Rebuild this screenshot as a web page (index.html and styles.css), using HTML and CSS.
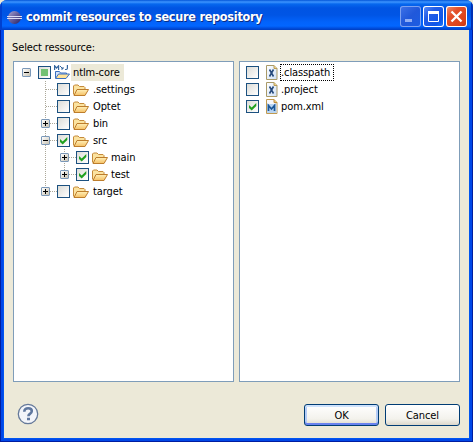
FILE: index.html
```html
<!DOCTYPE html>
<html lang="en">
<head>
<meta charset="utf-8">
<title>commit resources to secure repository</title>
<link rel="stylesheet" href="styles.css">
</head>
<body>
<svg class="defs" width="0" height="0" aria-hidden="true">
  <defs>
    <linearGradient id="fold" x1="0" y1="0" x2="0" y2="1"><stop offset="0" stop-color="#fff0b8"/><stop offset="1" stop-color="#f5c064"/></linearGradient>
    <linearGradient id="orb" x1="0" y1="0" x2="1" y2="1"><stop offset="0" stop-color="#aaa5d2"/><stop offset=".5" stop-color="#625c9c"/><stop offset="1" stop-color="#28205f"/></linearGradient>
    <linearGradient id="page" x1="0" y1="0" x2="1" y2="1"><stop offset="0" stop-color="#fff"/><stop offset="1" stop-color="#cfe0f5"/></linearGradient>
  </defs>
  <symbol id="folder" viewBox="0 0 16 16">
    <path d="M.5 12.500v-8.500l1-1h3.500l1.500 1.500h4.500l1 1v2" fill="#fbe3a0" stroke="#c58a3a"/>
    <path d="M1 13.500l3-6h11.500l-3.500 6z" fill="url(#fold)" stroke="#bd7d2c" stroke-linejoin="round"/>
  </symbol>
  <symbol id="project" viewBox="0 0 16 16">
    <path d="M1.500 13V6.500h4l1 1.500h6v2" fill="#d3e3fa" stroke="#3b6fc0"/>
    <path d="M1.500 13.500l3-4.500h11l-3.500 4.500z" fill="#ffe298" stroke="#3b6fc0" stroke-linejoin="round"/>
    <path d="M.6 5V.800l2 2.200 2-2.200V5M13.400 0v3.300q0 1.200-1.200 1.200h-1.200" fill="none" stroke="#34669e" stroke-width="1.200"/>
    <path d="M6 1l3 3M9 2v2H7" fill="none" stroke="#34669e"/>
  </symbol>
  <symbol id="tick" viewBox="0 0 13 13"><path d="M3 5v3l2.700 2.600L10.300 6V3L5.700 7.600z" fill="#21a121"/></symbol>
  <symbol id="xfile" viewBox="0 0 12 16">
    <path d="M.5.500h7.500l3 3v11H.5z" fill="url(#page)" stroke="#a99a68"/><path d="M8 .5v3h3" fill="#f1d58a" stroke="#b99c56"/>
    <path d="M3.500 4.500l4 7M7.500 4.500l-4 7" stroke="#264a7d" stroke-width="1.600"/>
  </symbol>
  <symbol id="mfile" viewBox="0 0 12 16">
    <path d="M.5.500h7.500l3 3v11H.5z" fill="#f7f8fb" stroke="#c09a50"/><path d="M8 .5v3h3" fill="#f1c878" stroke="#bd8d3e"/><path d="M1 5h9.500v9H1z" fill="#b9d4f1"/>
    <path d="M2.500 12V6.500l3 3.500 3-3.500V12" fill="none" stroke="#1b5798" stroke-width="1.700"/>
  </symbol>
</svg>
<div class="window">
  <header class="titlebar">
    <svg class="logo" width="15" height="15" viewBox="0 0 15 15"><circle cx="7.500" cy="7.500" r="6.500" fill="url(#orb)"/><path d="M0 6.500h15M0 8.500h15" stroke="#dcdcf3"/></svg>
    <h1 class="title">commit resources to secure repository</h1>
    <div class="controls">
      <span class="control minimize"><svg width="21" height="21"><path d="M5 13h7v3H5z" fill="#91aef5"/></svg></span>
      <span class="control maximize"><svg width="21" height="21"><path d="M5.500 6v9.500h10V6z" fill="none" stroke="#fff"/><path d="M5 5h11v3H5z" fill="#fff"/></svg></span>
      <span class="control close"><svg width="21" height="21"><path d="M5.500 5.500l10 10M15.500 5.500l-10 10" stroke="#fff" stroke-width="2.300"/></svg></span>
    </div>
  </header>
  <main class="content">
    <div class="prompt">Select ressource:</div>
    <div class="panes">
      <div class="pane tree">
        <div class="row root"><i class="expander"></i><i class="check partial"></i><svg class="icon"><use href="#project"/></svg><span class="label selected">ntlm-core</span></div>
        <div class="branch">
          <div class="row"><i class="gap"></i><i class="dots"></i><i class="check"></i><svg class="icon"><use href="#folder"/></svg><span class="label">.settings</span></div>
          <div class="row"><i class="gap"></i><i class="dots"></i><i class="check"></i><svg class="icon"><use href="#folder"/></svg><span class="label">Optet</span></div>
          <div class="row"><i class="expander plus"></i><i class="dots"></i><i class="check"></i><svg class="icon"><use href="#folder"/></svg><span class="label">bin</span></div>
          <div class="row"><i class="expander"></i><i class="dots"></i><i class="check"><svg><use href="#tick"/></svg></i><svg class="icon"><use href="#folder"/></svg><span class="label">src</span></div>
          <div class="branch nested">
            <div class="row"><i class="expander plus"></i><i class="dots"></i><i class="check"><svg><use href="#tick"/></svg></i><svg class="icon"><use href="#folder"/></svg><span class="label">main</span></div>
            <div class="row"><i class="expander plus"></i><i class="dots"></i><i class="check"><svg><use href="#tick"/></svg></i><svg class="icon"><use href="#folder"/></svg><span class="label">test</span></div>
          </div>
          <div class="row"><i class="expander plus"></i><i class="dots"></i><i class="check"></i><svg class="icon"><use href="#folder"/></svg><span class="label">target</span></div>
        </div>
      </div>
      <div class="pane files">
        <div class="row"><i class="check"></i><svg class="file"><use href="#xfile"/></svg><span class="label focused">.classpath</span></div>
        <div class="row"><i class="check"></i><svg class="file"><use href="#xfile"/></svg><span class="label">.project</span></div>
        <div class="row"><i class="check"><svg><use href="#tick"/></svg></i><svg class="file"><use href="#mfile"/></svg><span class="label">pom.xml</span></div>
      </div>
    </div>
    <footer class="footer">
      <svg class="help" width="22" height="22" viewBox="0 0 22 22"><circle cx="11" cy="11" r="9.700" fill="#f3f5fa" stroke="#657999" stroke-width="1.300"/><path d="M7.300 8.800q0-3.600 3.900-3.600 3.600 0 3.600 2.900 0 1.800-2 2.900-1.400.8-1.400 2.200" fill="none" stroke="#60789f" stroke-width="2.600"/><path d="M10 14.700h3v2.600h-3z" fill="#60789f"/></svg>
      <button class="button default">OK</button>
      <button class="button">Cancel</button>
    </footer>
  </main>
</div>
</body>
</html>
```
FILE: styles.css
```css
* { box-sizing: border-box; }
body {
  margin: 0;
  background: #ece9d8;
  font: 11px/17px "DejaVu Sans Condensed", "DejaVu Sans", sans-serif;
  color: #000;
}
.defs { display: block; height: 0; }
.window {
  width: 473px;
  height: 442px;
  display: flex;
  flex-direction: column;
  border-radius: 7px 7px 0 0;
  overflow: hidden;
  background: linear-gradient(#0058e6, #0046e0);
}
.titlebar {
  height: 30px;
  flex: none;
  display: flex;
  align-items: center;
  padding: 4px 6px 1px 7px;
  background: linear-gradient(#0355d8 0, #3d95ff 2px, #0668ee 4px, #0054e3 8px, #0055e5 15px, #0263fb 22px, #0266ff 26px, #004fe0 28px, #003dc0 30px);
  box-shadow: inset 2px 0 #0040cf, inset -2px 0 #0030b5;
}
.title {
  margin: 0 auto 0 4px;
  font: bold 12.5px/20px "DejaVu Sans Condensed", sans-serif;
  letter-spacing: -.25px;
  color: #fff;
  text-shadow: 1px 1px #0b2c83;
  white-space: nowrap;
}
.logo { margin-top: 1px; }
.controls { display: flex; gap: 2px; }
.control {
  width: 21px;
  height: 21px;
  border-radius: 3px;
  box-shadow: inset 0 0 0 1px #fff;
  background: linear-gradient(135deg, #5e91fa, #245de6 35%, #0d55e9 75%, #1f7dff);
}
.control svg { display: block; }
.minimize { box-shadow: inset 0 0 0 1px #7ca1f1; background: linear-gradient(135deg, #3f73e8, #2158da 50%, #1c5de3); }
.close { background: linear-gradient(135deg, #f1926f, #e3502b 35%, #dc4219 75%, #c43410); }
.content {
  flex: 1;
  display: flex;
  flex-direction: column;
  margin: 0 4px 4px;
  padding: 9px 9px 0;
  background: #ece9d8;
  box-shadow: 0 0 0 1px #0055f0, 0 0 0 3px #0047e8, 0 0 0 4px #001da0;
  clip-path: inset(0 -4px -4px);
}
.prompt { height: 22px; margin-left: -1px; letter-spacing: -.12px; }
.panes { display: flex; gap: 5px; height: 321px; }
.pane { width: 221px; border: 1px solid #7f9db9; background: #fff; padding-top: 2px; }
.tree { padding-left: 8px; }
.files { padding-left: 6px; }
.row { display: flex; align-items: center; height: 17px; }
.check {
  display: block;
  width: 13px;
  height: 13px;
  flex: none;
  border: 1px solid #1c5180;
  background: linear-gradient(135deg, #dcdcd7, #fff);
}
.check svg { display: block; width: 13px; height: 13px; margin: -1px; }
.partial { margin-left: 7px; padding: 2px; }
.partial::before { content: ""; display: block; width: 7px; height: 7px; background: #73c173; }
.expander {
  display: block;
  width: 9px;
  height: 9px;
  flex: none;
  border: 1px solid #7b98b8;
  border-radius: 1px;
  background: linear-gradient(#000, #000) 1px 3px / 5px 1px no-repeat, linear-gradient(135deg, #fff, #c8c2b2);
}
.plus {
  background: linear-gradient(#000, #000) 1px 3px / 5px 1px no-repeat, linear-gradient(#000, #000) 3px 1px / 1px 5px no-repeat, linear-gradient(135deg, #fff, #c8c2b2);
}
.gap { width: 4px; margin-right: 5px; }
.dots { width: 8px; height: 1px; background: repeating-linear-gradient(90deg, #aca899 0 1px, transparent 1px 2px); }
.gap + .dots { width: 12px; margin-left: -4px; }
.branch {
  margin-left: 19px;
  background: repeating-linear-gradient(#aca899 0 1px, transparent 1px 2px) 4px 0 / 1px 111px no-repeat;
}
.nested { background-size: 1px 25px; }
.dots + .check { margin-left: -1px; }
.icon { width: 16px; height: 16px; flex: none; margin-left: 3px; }
.label { margin-left: 4px; white-space: nowrap; letter-spacing: -.1px; }
.nested .label { margin-left: 3px; }
.selected { width: 53px; height: 17px; margin-left: 1px; padding-left: 2px; background: #ece9d8; }
.file { width: 12px; height: 16px; flex: none; margin-left: 7px; }
.files .label { margin-left: 3px; }
.files .focused { width: 54px; margin-left: 2px; border: 1px dotted #000; line-height: 15px; }
.footer { display: flex; align-items: flex-start; padding: 21px 0 0 4px; }
.help { margin-right: auto; }
.button {
  width: 75px;
  height: 22px;
  margin: 1px 0 0 6px;
  padding: 0;
  border: 1px solid #003c74;
  border-radius: 3px;
  background: linear-gradient(#fff, #f3f2ec 70%, #dcd7cb);
  font: inherit;
  letter-spacing: -.1px;
  color: #000;
}
.default { box-shadow: inset 0 2px #cee2fc, inset 0 -2px #6982ee, inset 2px 0 #b4ccf6, inset -2px 0 #b4ccf6; }
```
